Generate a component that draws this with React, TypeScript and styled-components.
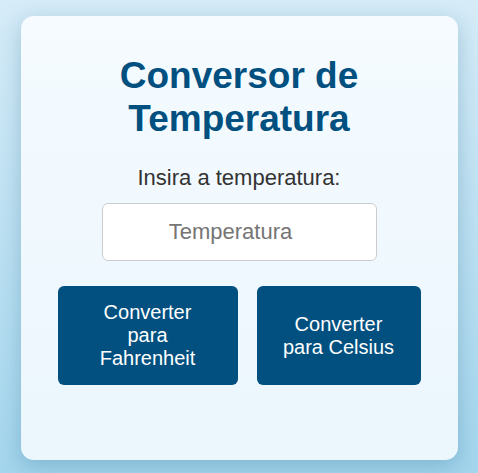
import React from "react";
import styled, { createGlobalStyle } from "styled-components";

const Global = createGlobalStyle`
  html, body { margin: 0; padding: 0; height: 100%; }
  body {
    font-family: "Liberation Sans", Arial, sans-serif;
    background: linear-gradient(to bottom, #d6ecf8 0%, #a4d6ed 100%);
  }
  #root { min-height: 100%; }
`;

const Page = styled.div`
  display: flex;
  justify-content: center;
  align-items: flex-start;
  padding-top: 16px;
  min-height: 473px;
  box-sizing: border-box;
`;

const Card = styled.div`
  width: 437px;
  height: 444px;
  box-sizing: border-box;
  border-radius: 13px;
  background: linear-gradient(to bottom, #f5fbff 0%, #ebf6fd 100%);
  box-shadow: 0 6px 22px rgba(20, 90, 130, 0.28);
  display: flex;
  flex-direction: column;
  align-items: center;
  padding-top: 38px;
`;

const Title = styled.h1`
  margin: 0;
  font-size: 37px;
  line-height: 43px;
  font-weight: 700;
  color: #02507f;
  text-align: center;
  width: 260px;
`;

const Label = styled.label`
  margin-top: 25px;
  font-size: 22px;
  line-height: 25px;
  color: #333333;
`;

const Input = styled.input`
  margin-top: 13px;
  width: 275px;
  height: 58px;
  box-sizing: border-box;
  border: 1px solid #cccccc;
  border-radius: 6px;
  background: #ffffff;
  padding: 0 18px 0 1px;
  font-family: "Liberation Sans", Arial, sans-serif;
  font-size: 22px;
  text-align: center;
  color: #333;
  outline: none;
  &::placeholder { color: #757575; }
`;

const ButtonRow = styled.div`
  margin-top: 25px;
  display: flex;
  gap: 19px;
`;

const Button = styled.button<{ $w: number }>`
  width: ${(p) => p.$w}px;
  height: 99px;
  border: none;
  border-radius: 6px;
  background: #02507f;
  color: #ffffff;
  font-family: "Liberation Sans", Arial, sans-serif;
  font-size: 20px;
  line-height: 23px;
  padding: 0 24px;
  text-align: center;
  cursor: pointer;
`;

export default function App() {
  return (
    <>
      <Global />
      <Page>
        <Card>
          <Title>Conversor de Temperatura</Title>
          <Label htmlFor="temp">Insira a temperatura:</Label>
          <Input id="temp" placeholder="Temperatura" />
          <ButtonRow>
            <Button $w={180}>Converter para Fahrenheit</Button>
            <Button $w={164}>Converter para Celsius</Button>
          </ButtonRow>
        </Card>
      </Page>
    </>
  );
}
